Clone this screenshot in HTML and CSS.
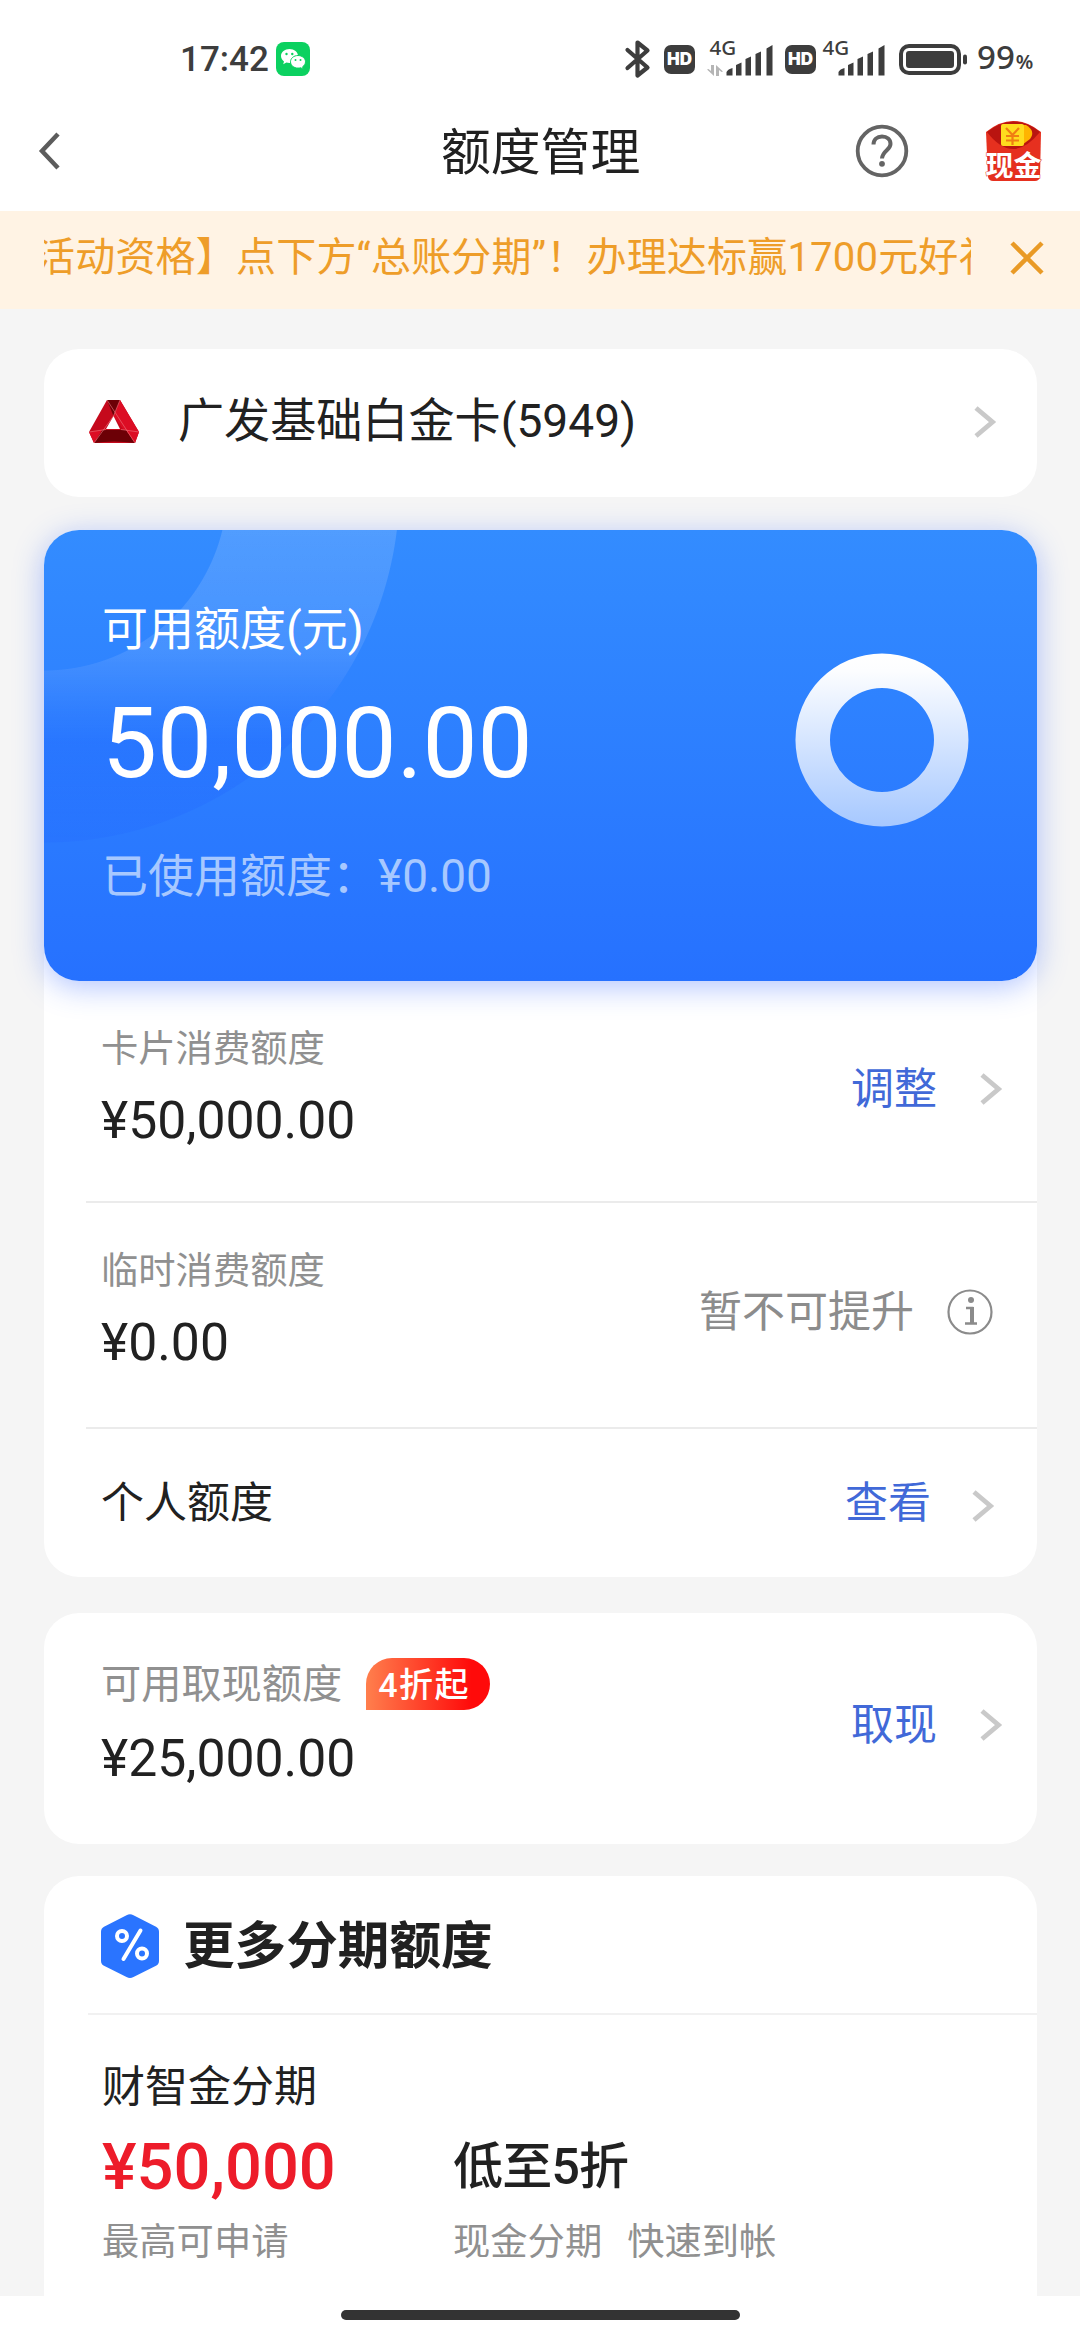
FILE: index.html
```html
<!DOCTYPE html>
<html lang="zh-CN">
<head>
<meta charset="utf-8">
<title>额度管理</title>
<link rel="stylesheet" href="styles.css">
</head>
<body>
<div class="page">
  <header class="top">
    <div class="status">
      <div class="status-left">
        <span class="clock">17:42</span>
        <svg class="wechat" width="34" height="34" viewBox="0 0 34 34">
          <rect width="34" height="34" rx="8" fill="#0bd160"/>
          <path d="M13.500 7C8.800 7 5 10 5 14c0 2.200 1.200 4.100 3 5.400l-.8 2.800 3.200-1.700c1 .3 2 .4 3.100.4 4.700 0 8.500-3.100 8.500-6.900S18.200 7 13.500 7z" fill="#fff"/>
          <path d="M22 13.500c-4.200 0-7.500 2.800-7.500 6.300s3.300 6.300 7.500 6.300c.9 0 1.800-.1 2.600-.4l2.700 1.500-.7-2.400c1.700-1.200 2.900-3 2.900-5 0-3.500-3.400-6.300-7.500-6.300z" fill="#fff" stroke="#0bd160" stroke-width="1"/>
          <g fill="#0bd160"><circle cx="10.500" cy="12" r="1.200"/><circle cx="16.300" cy="12" r="1.200"/><circle cx="19.500" cy="18" r="1"/><circle cx="24.500" cy="18" r="1"/></g>
        </svg>
      </div>
      <div class="status-right">
        <svg width="26" height="40" viewBox="0 0 26 40"><path d="M2.500 11 22.500 28.500 12.500 36.500V3.500L22.500 11.500 2.500 29" fill="none" stroke="#3d3d3d" stroke-width="4.200" stroke-linejoin="round" stroke-linecap="round"/></svg>
        <svg class="hd" width="31" height="29" viewBox="0 0 31 29"><rect width="31" height="29" rx="7" fill="#3d3d3d"/><text x="15.500" y="20" text-anchor="middle" class="hd-text">HD</text></svg>
        <svg class="net" width="66" height="60" viewBox="0 -10 66 60">
          <text x="2.500" y="16" class="net-text">4G</text>
          <g fill="#b5b5b5"><path d="M4 26h3v11L0 30.500l1.500-.5 2.500 2zM9 37h3v-6l2.500 2L16 32.500 9 26z"/></g>
          <g fill="#3d3d3d"><path d="M19.500 36.500v-3.500q1.500-3 6-4v7.500zM29 36.500V26l5.500-2.500v13zM38.500 36.500V20l5.500-2.500v19zM48.500 36.500V15l5.500-2.500v24zM59.500 36.500V9.500L65.500 6v30.500z"/></g>
        </svg>
        <svg class="hd hd-b" width="31" height="29" viewBox="0 0 31 29"><rect width="31" height="29" rx="7" fill="#3d3d3d"/><text x="15.500" y="20" text-anchor="middle" class="hd-text">HD</text></svg>
        <svg class="net-b" width="64" height="60" viewBox="0 -10 64 60">
          <text x="0.500" y="16" class="net-text">4G</text>
          <g fill="#3d3d3d" transform="translate(-3 0)"><path d="M19.500 36.500v-3.500q1.500-3 6-4v7.500zM29 36.500V26l5.500-2.500v13zM38.500 36.500V20l5.500-2.500v19zM48.500 36.500V15l5.500-2.500v24zM59.500 36.500V9.500L65.500 6v30.500z"/></g>
        </svg>
        <svg class="battery" width="69" height="31" viewBox="0 0 69 31"><rect x="2" y="2" width="58" height="27" rx="8" fill="none" stroke="#3d3d3d" stroke-width="4"/><rect x="7" y="7" width="48" height="17" rx="3" fill="#3d3d3d"/><rect x="64" y="10.500" width="4" height="10" rx="2" fill="#3d3d3d"/></svg>
        <span class="percent">99<small>%</small></span>
      </div>
    </div>
    <nav class="nav">
      <svg class="back" width="24" height="40" viewBox="0 0 24 40"><path d="M20 3 4 20 20 37" fill="none" stroke="#5c5c5c" stroke-width="4.500"/></svg>
      <h1>额度管理</h1>
      <svg class="help" width="54" height="54" viewBox="0 0 54 54"><circle cx="27" cy="27" r="24.300" fill="none" stroke="#646464" stroke-width="3.800"/><path d="M18.500 20.500c0-5 3.500-8 8.500-8s8.500 3 8.500 7.500c0 6-8 6.500-8.500 14.500" fill="none" stroke="#646464" stroke-width="4"/><circle cx="27" cy="39.800" r="2.900" fill="#646464"/></svg>
      <svg class="cash" width="68" height="76" viewBox="-4 -4 68 76">
        <path d="M2 12Q29 -10 57 12L56 57q-1 4-5 4H9q-4 0-5-4z" fill="#e6301f"/>
        <path d="M3 12Q29 -9 56 12 42 29 29 29T3 12z" fill="#b91410"/>
        <path d="M38 5h4q10 6 4 14l-8 6z" fill="#ffb400"/>
        <rect x="17" y="4" width="23" height="22" rx="2" fill="#ffdc1e"/>
        <path d="M22 8l6.500 7L35 8M28.500 15v10M22 16h13M22 20.500h13" fill="none" stroke="#f07e12" stroke-width="2.200"/>
        <text x="29.500" y="56" text-anchor="middle" class="cash-text">现金</text>
      </svg>
    </nav>
  </header>

  <div class="notice">
    <div class="notice-text">活动资格】点下方“总账分期”！办理达标赢1700元好礼</div>
    <svg class="close" width="34" height="34" viewBox="0 0 34 34"><path d="M2 2 32 32M32 2 2 32" stroke="#e99a26" stroke-width="4.500"/></svg>
  </div>

  <main class="content">
    <section class="card picker">
      <svg class="logo" width="52" height="45" viewBox="0 0 52 45">
        <path d="M19 1h13L51 33l-4 11H6L1 33z" fill="#c5091c"/>
        <path d="M32 1 25.500 17 38 34 51 33z" fill="#dc0d24"/>
        <path d="M19 1h13l-6.500 16z" fill="#6c0006"/>
        <path d="M14 31h24l9 13Q26 41 6 44z" fill="#6c0006"/>
        <path d="M1 33 14 31 6 44zM51 33 38 31l9 13z" fill="#dc0d24"/>
        <path d="M25.500 17 32 30H18z" fill="#fff"/>
        <path d="M1 33 18 30.500M51 33 33 30.500M25.500 17 6 44M19 1l28 43M32 1l-6.500 16" fill="none" stroke="#ee7780" stroke-width=".6"/>
      </svg>
      <span class="card-name">广发基础白金卡(5949)</span>
      <svg class="chev" width="22" height="32" viewBox="0 0 22 32"><path d="M2 2 18.500 16 2 30" fill="none" stroke="#c9c9c9" stroke-width="4.800"/></svg>
    </section>

    <section class="card limits">
      <div class="hero">
        <div class="arc"></div>
        <div class="hero-text">
          <div class="hero-label">可用额度(元)</div>
          <div class="hero-sum">50,000.00</div>
          <div class="hero-used">已使用额度：¥0.00</div>
        </div>
        <svg class="ring" width="174" height="174" viewBox="0 0 174 174">
          <defs><linearGradient id="ringFill" x1="0" y1="0" x2="0" y2="1"><stop offset="0" stop-color="#fff"/><stop offset=".1" stop-color="#fcfdff"/><stop offset="1" stop-color="#a6c8ff"/></linearGradient></defs>
          <path fill="url(#ringFill)" fill-rule="evenodd" d="M87 .5a86.500 86.500 0 1 0 0 173 86.500 86.500 0 0 0 0-173zM87 35a52 52 0 1 1 0 104 52 52 0 0 1 0-104z"/>
        </svg>
      </div>
      <div class="row row-card">
        <div class="amount"><span class="label">卡片消费额度</span><span class="sum">¥50,000.00</span></div>
        <div class="action"><span class="link">调整</span><svg class="chev" width="22" height="32" viewBox="0 0 22 32"><path d="M2 2 18.500 16 2 30" fill="none" stroke="#c9c9c9" stroke-width="4.800"/></svg></div>
      </div>
      <div class="row row-temp">
        <div class="amount"><span class="label">临时消费额度</span><span class="sum">¥0.00</span></div>
        <div class="action"><span class="muted">暂不可提升</span>
          <svg class="info" width="46" height="46" viewBox="0 0 46 46"><circle cx="23" cy="23" r="21.500" fill="none" stroke="#8b8b8b" stroke-width="2.200"/><circle cx="24" cy="11" r="3" fill="#8b8b8b"/><path d="M19 19h6v15M18 34.500h12" fill="none" stroke="#8b8b8b" stroke-width="2.600"/><path d="M25 18v16" stroke="#8b8b8b" stroke-width="4"/></svg></div>
      </div>
      <div class="row row-person">
        <span class="name">个人额度</span>
        <div class="action"><span class="link">查看</span><svg class="chev" width="22" height="32" viewBox="0 0 22 32"><path d="M2 2 18.500 16 2 30" fill="none" stroke="#c9c9c9" stroke-width="4.800"/></svg></div>
      </div>
    </section>

    <section class="card cashout">
      <div class="amount">
        <div class="label-line"><span class="label label-lg">可用取现额度</span><span class="badge">4折起</span></div>
        <span class="sum">¥25,000.00</span>
      </div>
      <div class="action"><span class="link">取现</span><svg class="chev" width="22" height="32" viewBox="0 0 22 32"><path d="M2 2 18.500 16 2 30" fill="none" stroke="#c9c9c9" stroke-width="4.800"/></svg></div>
    </section>

    <section class="card more">
      <div class="more-head">
        <svg class="hex" width="60" height="64" viewBox="0 0 60 64"><path d="M26.500 1.200q3.500-1.800 7 0l22.500 11.500q3 1.500 3 5v29q0 3.500-3 5L33.500 63q-3.500 1.800-7 0L4 51.700q-3-1.500-3-5v-29q0-3.500 3-5z" fill="#2a74ff"/><g fill="none" stroke="#fff" stroke-width="4" stroke-linecap="round"><circle cx="22" cy="22" r="5"/><circle cx="42" cy="39.500" r="5"/><path d="M40.500 16.500 23.500 45"/></g></svg>
        <h2>更多分期额度</h2>
      </div>
      <div class="product">
        <div class="name product-name">财智金分期</div>
        <div class="cell"><span class="price">¥50,000</span><span class="sub">最高可申请</span></div>
        <div class="cell"><span class="offer">低至5折</span><span class="sub tags"><span>现金分期</span><span>快速到帐</span></span></div>
      </div>
    </section>
  </main>
  <footer class="home"><div class="home-bar"></div></footer>
</div>
</body>
</html>
```
FILE: styles.css
```css
* { box-sizing: border-box; }
body {
  margin: 0;
  background: #f5f5f5;
  color: #212121;
  font-family: Roboto, "Noto Sans CJK SC", sans-serif;
}
svg { display: block; flex: none; overflow: visible; }
h1, h2 { margin: 0; }
.page {
  width: 1080px;
  height: 2340px;
  overflow: hidden;
  display: flex;
  flex-direction: column;
}

/* status bar and navigation */
.top { flex: none; height: 211px; background: #fff; }
.status {
  height: 118px;
  padding: 0 46px 0 180px;
  display: flex;
  justify-content: space-between;
  align-items: center;
}
.status-left, .status-right { display: flex; align-items: center; }
.clock { font-size: 35px; font-weight: 500; line-height: 40px; color: #3d3d3d; width: 96px; padding-top: 1px; }
.hd { margin-left: 13px; }
.hd-text { font: 900 17px Inter, sans-serif; fill: #fff; }
.net { margin-left: 12px; }
.net-text { font: 500 20.500px "Noto Sans", sans-serif; fill: #3d3d3d; }
.hd-b { margin-left: 12px; }
.net-b { margin-left: 6px; }
.battery { margin-left: 13px; }
.percent {
  margin-left: 9px;
  width: 57px;
  padding-top: 1px;
  font: 500 33px/40px "Noto Sans", sans-serif;
  color: #3d3d3d;
  white-space: nowrap;
}
.percent small { font-size: 20px; font-weight: 600; margin-left: 1px; }
.nav { height: 66px; display: flex; align-items: center; padding: 0 32px 0 38px; }
.nav h1 {
  margin-left: 379px;
  width: 204px;
  padding-top: 3px;
  font-size: 49.800px;
  line-height: 66px;
  font-weight: 400;
  white-space: nowrap;
}
.help { margin-left: 211px; }
.cash { margin-left: 71px; margin-top: 6px; }
.cash-text { font: 700 28px "Noto Sans CJK SC", sans-serif; fill: #fff; stroke: #e0301f; stroke-width: 1px; paint-order: stroke; }

/* scrolling notice */
.notice {
  flex: none;
  height: 98px;
  padding: 0 36px 5px 44px;
  background: #fff3e4;
  display: flex;
  align-items: center;
  justify-content: space-between;
}
.notice-text {
  width: 927px;
  overflow: hidden;
  white-space: nowrap;
  text-indent: -9px;
  font-size: 40px;
  letter-spacing: .2px;
  line-height: 60px;
  color: #ee9d29;
}

/* cards */
.content { flex: 1; padding: 40px 43px 0 44px; overflow: hidden; display: flex; flex-direction: column; }
.card { flex: none; background: #fff; border-radius: 35px; }
.picker { height: 148px; display: flex; align-items: center; padding: 0 41px 3px 44px; }
.card-name { flex: 1; margin-left: 38px; font-size: 46.100px; line-height: 60px; padding-bottom: 1px; }
.limits { margin-top: 33px; height: 1047px; }

.hero {
  position: relative;
  height: 451px;
  border-radius: 35px;
  background: linear-gradient(#338cff, #2671ff);
  box-shadow: 0 6px 30px rgba(50, 100, 255, .38);
  color: #fff;
  display: flex;
  justify-content: space-between;
  padding: 69px 68px 0 58px;
}
.arc {
  position: absolute;
  inset: 0;
  border-radius: 35px;
  background: linear-gradient(rgba(255,255,255,.15), rgba(255,255,255,.11) 120px, rgba(60,120,255,.2) 180px, rgba(30,96,255,.28) 212px, rgba(32,96,255,.16) 312px);
  -webkit-mask: radial-gradient(circle at 0 -43px, transparent 183px, #000 184px, #000 355px, transparent 356px);
  mask: radial-gradient(circle at 0 -43px, transparent 183px, #000 184px, #000 355px, transparent 356px);
}
.hero-text, .ring { position: relative; }
.hero-label { font-size: 46px; line-height: 60px; }
.hero-sum { margin-top: 30px; font-size: 98px; line-height: 110px; }
.hero-used { margin-top: 47px; font-size: 46px; line-height: 60px; color: #a7c8ff; }
.ring { margin-top: 54px; }

.row { margin-left: 42px; padding: 0 35px 0 15px; display: flex; justify-content: space-between; }
.row-card, .row-temp { border-bottom: 2px solid #ebebeb; padding-top: 43px; }
.row-card { height: 222px; }
.row-temp { height: 226px; }
.row-person { height: 148px; align-items: center; }
.amount { display: flex; flex-direction: column; }
.label { font-size: 37.3px; line-height: 50px; color: #909090; }
.sum { margin-top: 17px; font-size: 51.700px; line-height: 60px; }
.action { display: flex; align-items: center; }
.row-card .action { height: 130px; }
.row-temp .action { height: 131px; }
.link { font-size: 43px; line-height: 60px; color: #4169d8; margin-right: 43px; }
.muted { font-size: 43px; line-height: 60px; color: #8c8c8c; margin-right: 33px; }
.row-temp { padding-right: 44px; }
.row-person { padding-right: 43px; }
.row-person .link { margin-right: 41px; }
.row-person .chev { margin-top: 6px; }
.name { font-size: 43px; line-height: 60px; }

.cashout { margin-top: 36px; height: 231px; padding: 43px 35px 0 57px; display: flex; justify-content: space-between; }
.label-line { display: flex; align-items: center; height: 56px; }
.label-lg { font-size: 40.200px; padding-top: 2px; }
.badge {
  margin-left: 24px;
  width: 124px;
  height: 52px;
  padding-left: 12px;
  border-radius: 26px 26px 26px 0;
  background: linear-gradient(90deg, #ff7f4d, #ff0a0a 85%);
  color: #fff;
  font-size: 34px;
  letter-spacing: 1.500px;
  font-weight: 500;
  line-height: 54px;
  white-space: nowrap;
}
.cashout .action { height: 138px; }

.more { margin-top: 32px; height: 460px; }
.more-head { margin-left: 44px; height: 139px; padding: 3px 0 0 12px; display: flex; align-items: center; border-bottom: 2px solid #f1f1f1; }
.more-head h2 { margin-left: 23px; font-size: 51.600px; font-weight: 700; line-height: 70px; padding-top: 2px; }
.product { padding: 42px 0 0 58px; display: grid; grid-template-columns: 351px 1fr; }
.product-name { grid-column: 1 / 3; }
.cell { display: flex; flex-direction: column; color: #212121; }
.price { color: #ed1c2a; font-size: 65px; font-weight: 500; line-height: 80px; margin-top: 10px; }
.offer { font-size: 50px; font-weight: 500; line-height: 80px; margin-top: 10px; letter-spacing: -.8px; }
.sub { font-size: 37.3px; line-height: 50px; color: #909090; margin-top: 10px; }
.tags { display: flex; gap: 25px; }

.home { flex: none; height: 44px; background: #fff; padding-top: 14px; }
.home-bar { width: 399px; height: 10px; margin: 0 auto; border-radius: 5px; background: #333; }
```
